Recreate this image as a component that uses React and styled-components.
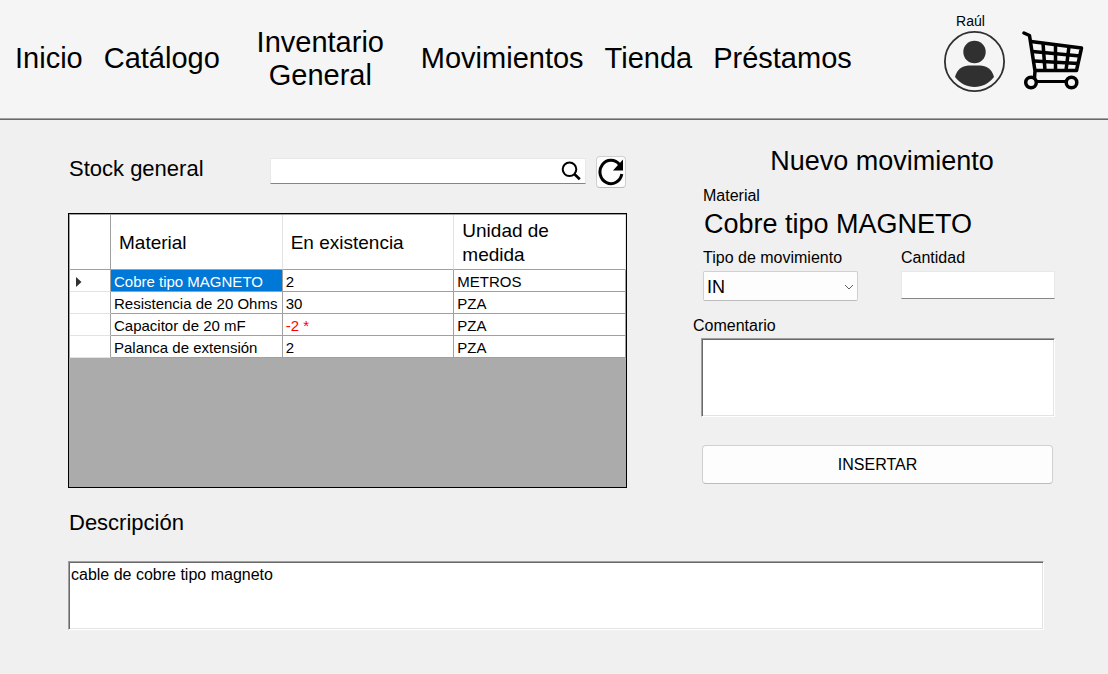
import React, { useState } from "react";
import styled, { createGlobalStyle } from "styled-components";

const GlobalStyle = createGlobalStyle`
  *, *::before, *::after { box-sizing: border-box; }
  body {
    margin: 0;
    background: #f0f0f0;
    color: #000;
    font: 16px/20px "Liberation Sans", Arial, sans-serif;
  }
  button, input, select, textarea { font: inherit; color: inherit; }
`;

const Header = styled.header`
  display: flex;
  align-items: center;
  justify-content: space-between;
  height: 120px;
  padding: 0 23px 2px 15px;
  background: #f5f5f5;
  border-bottom: 1px solid #696969;
  box-shadow: inset 0 -1px #a0a0a0;
`;

const Nav = styled.nav`
  display: flex;
  align-items: center;
  gap: 21px;
`;

const NavLink = styled.a`
  width: ${(p) => (p.$wrap ? "159px" : "auto")};
  color: inherit;
  font-size: 29px;
  line-height: 33px;
  text-align: center;
  text-decoration: none;
`;

const Account = styled.div`
  display: flex;
  align-items: flex-end;
  gap: 17px;
  padding-bottom: 13px;
`;

const User = styled.div`
  display: flex;
  flex-direction: column;
`;

const UserName = styled.span`
  padding: 0 8px 1px 0;
  font-size: 14px;
  line-height: 18px;
  text-align: center;
`;

const IconButton = styled.button`
  display: block;
  padding: 0;
  border: 0;
  background: none;
  svg { display: block; }
`;

const Main = styled.main`
  display: grid;
  grid-template-columns: minmax(0, 559fr) minmax(0, 362fr);
  column-gap: 66px;
  padding: 24px 53px 44px 68px;
`;

const Stock = styled.section`
  display: flex;
  flex-direction: column;
  padding-top: 12px;
`;

const Toolbar = styled.div`
  display: flex;
  align-items: center;
  gap: 10px;
  margin-bottom: 25px;
  padding-right: 1px;
`;

const SectionTitle = styled.h2`
  margin: 0;
  padding-left: 1px;
  font-size: 22px;
  font-weight: 400;
  line-height: 26px;
`;

const ToolbarTitle = styled(SectionTitle)`
  width: 192px;
  padding-bottom: 6px;
`;

const SearchBox = styled.div`
  display: flex;
  flex: 1;
  align-items: center;
  height: 26px;
  margin-bottom: 2px;
  padding-right: 4px;
  background: #fff;
  border: 1px solid #e8e8e8;
  border-bottom-color: #868686;
`;

const SearchInput = styled.input`
  flex: 1;
  min-width: 0;
  height: 22px;
  padding: 0 4px;
  border: 0;
  outline: 0;
  background: none;
`;

const RefreshButton = styled(IconButton)`
  display: grid;
  place-items: center;
  width: 30px;
  height: 32px;
  background: #fdfdfd;
  border: 1px solid #d0d0d0;
  border-bottom-color: #bcbcbc;
  border-radius: 4px;
`;

const GridFrame = styled.div`
  height: 275px;
  overflow: auto;
  background: #ababab;
  border: 1px solid #000;
`;

const Table = styled.table`
  width: 100%;
  table-layout: fixed;
  border-collapse: separate;
  border-spacing: 0;
  border-top: 1px solid #a0a0a0;
  border-left: 1px solid #a0a0a0;
  background: #fff;
`;

const ColumnHeader = styled.th`
  width: ${(p) => (p.$marker ? "41px" : "auto")};
  height: 55px;
  padding: 2px 20px 0 8px;
  border-right: 1px solid ${(p) => (p.$marker ? "#a0a0a0" : "#e3e3e3")};
  border-bottom: 1px solid #a0a0a0;
  font-size: 19px;
  font-weight: 400;
  line-height: 24px;
  text-align: left;
`;

const RowMarker = styled.th`
  height: 22px;
  padding: 2px 0 0 6px;
  border-right: 1px solid #a0a0a0;
  border-bottom: 1px solid #e3e3e3;
  svg { display: block; }
`;

const Cell = styled.td`
  height: 22px;
  padding: 3px 0 0 3px;
  border-right: 1px solid #a0a0a0;
  border-bottom: 1px solid #a0a0a0;
  background: ${(p) => (p.$selected ? "#0078d7" : "#fff")};
  color: ${(p) => (p.$selected ? "#fff" : p.$alert ? "#f00" : "#000")};
  font-size: 15px;
  line-height: 18px;
  white-space: nowrap;
`;

const Form = styled.form`
  display: flex;
  flex-direction: column;
`;

const FormTitle = styled.h2`
  margin: 0 0 8px;
  padding-left: 16px;
  font-size: 27px;
  font-weight: 400;
  line-height: 34px;
  text-align: center;
`;

const MaterialName = styled.output`
  padding: 2px 0 8px 11px;
  font-size: 27px;
  line-height: 32px;
`;

const Label = styled.label`
  display: block;
  padding-left: ${(p) => (p.$inset ? "10px" : "0")};
`;

const FieldRow = styled.div`
  display: grid;
  grid-template-columns: 155fr 154fr;
  column-gap: 43px;
  margin-bottom: 15px;
  padding-left: 10px;
`;

const Field = styled.div`
  display: flex;
  flex-direction: column;
  gap: 3px;
`;

const SelectBox = styled.div`
  position: relative;
  svg {
    position: absolute;
    top: 13px;
    right: 4px;
    pointer-events: none;
  }
`;

const Select = styled.select`
  display: block;
  width: 100%;
  height: 30px;
  padding: 2px 20px 0 3px;
  appearance: none;
  background: #fdfdfd;
  border: 1px solid #d0d0d0;
  border-bottom-color: #bcbcbc;
  border-radius: 2px;
  font-size: 18px;
`;

const NumberInput = styled.input`
  width: 100%;
  height: 28px;
  padding: 0 4px;
  background: #fff;
  border: 1px solid #e8e8e8;
  border-bottom-color: #868686;
  outline: 0;
`;

const TextArea = styled.textarea`
  display: block;
  height: ${(p) => (p.$size === "large" ? "79px" : "69px")};
  padding: 3px 2px;
  resize: none;
  outline: 0;
  background: #fff;
  border: 1px solid;
  border-color: #a0a0a0 #fff #fff #a0a0a0;
  box-shadow: inset 1px 1px #696969, inset -1px -1px #e3e3e3;
`;

const Comment = styled(TextArea)`
  margin: 2px 0 28px 8px;
`;

const SubmitButton = styled.button`
  height: 39px;
  margin: 0 2px 0 9px;
  background: #fdfdfd;
  border: 1px solid #d0d0d0;
  border-bottom-color: #bcbcbc;
  border-radius: 4px;
`;

const Description = styled.section`
  display: flex;
  grid-column: 1 / -1;
  flex-direction: column;
  gap: 25px;
  padding: 22px 11px 0 0;
`;

const AvatarIcon = () => (
  <svg width="61" height="61" viewBox="0 0 61 61" fill="#303030">
    <circle cx="30.5" cy="30.5" r="29.6" fill="none" stroke="#303030" strokeWidth="1.8" />
    <circle cx="30.5" cy="21" r="11.2" />
    <path d="M11 46C13 38 19 34.5 25 34.5H36C42 34.5 48 38 50 46C45 52.500 38 56 30.500 56C23 56 16 52.500 11 46Z" />
  </svg>
);

const CartIcon = () => (
  <svg width="63" height="61" viewBox="0.5 1 63 61" fill="none" stroke="#000" strokeWidth="3.5" strokeLinejoin="round">
    <path d="M2.500 3L8 5.500L13.500 41L13 48" strokeLinecap="round" />
    <path d="M9.500 11.500L60 18L55 40.500H13.500" />
    <path d="M11 21.500L58.500 26M12.500 31L56.500 33.500" />
    <path d="M21.500 13L23.500 40.500M34 14.500V40.500M47.500 16.500L44.500 40.500" />
    <circle cx="9.500" cy="52.500" r="5.300" />
    <circle cx="50" cy="52.500" r="5.300" />
    <path d="M15 51.500H44.500" strokeWidth="3" />
  </svg>
);

const SearchIcon = () => (
  <svg width="20" height="20" viewBox="0 0 20 20" fill="none" stroke="#000">
    <circle cx="8.500" cy="8.300" r="6.800" strokeWidth="2" />
    <path d="M13.300 13L18.800 18.300" strokeWidth="2.600" />
  </svg>
);

const RefreshIcon = () => (
  <svg width="28" height="28" viewBox="0 0 28 28">
    <path d="M24.800 16A11 11.700 0 1 1 22.500 6.500" fill="none" stroke="#000" strokeWidth="3" />
    <path d="M26 1.500V12.500H16Z" />
  </svg>
);

const ChevronIcon = () => (
  <svg width="10" height="7" viewBox="0 0 10 7" fill="none" stroke="#606060">
    <path d="M1 1L5 5L9 1" />
  </svg>
);

const CurrentRowIcon = () => (
  <svg width="6" height="10" viewBox="0 0 6 10" fill="#303030">
    <path d="M0 0L5.500 5L0 10Z" />
  </svg>
);

const links = ["Inicio", "Catálogo", "Inventario General", "Movimientos", "Tienda", "Préstamos"];

const rows = [
  { material: "Cobre tipo MAGNETO", stock: "2", unit: "METROS" },
  { material: "Resistencia de 20 Ohms", stock: "30", unit: "PZA" },
  { material: "Capacitor de 20 mF", stock: "-2 *", unit: "PZA", alert: true },
  { material: "Palanca de extensión", stock: "2", unit: "PZA" },
];

export default function App() {
  const [selected, setSelected] = useState(0);

  return (
    <>
      <GlobalStyle />
      <Header>
        <Nav>
          {links.map((name) => (
            <NavLink key={name} href="#" $wrap={name.includes(" ")}>
              {name}
            </NavLink>
          ))}
        </Nav>
        <Account>
          <User>
            <UserName>Raúl</UserName>
            <IconButton type="button" aria-label="Perfil">
              <AvatarIcon />
            </IconButton>
          </User>
          <IconButton type="button" aria-label="Carrito">
            <CartIcon />
          </IconButton>
        </Account>
      </Header>

      <Main>
        <Stock>
          <Toolbar>
            <ToolbarTitle>Stock general</ToolbarTitle>
            <SearchBox>
              <SearchInput type="text" aria-label="Buscar" />
              <SearchIcon />
            </SearchBox>
            <RefreshButton type="button" aria-label="Actualizar">
              <RefreshIcon />
            </RefreshButton>
          </Toolbar>
          <GridFrame>
            <Table>
              <thead>
                <tr>
                  <ColumnHeader $marker />
                  <ColumnHeader>Material</ColumnHeader>
                  <ColumnHeader>En existencia</ColumnHeader>
                  <ColumnHeader>Unidad de medida</ColumnHeader>
                </tr>
              </thead>
              <tbody>
                {rows.map((row, i) => (
                  <tr key={row.material} onClick={() => setSelected(i)}>
                    <RowMarker>{selected === i && <CurrentRowIcon />}</RowMarker>
                    <Cell $selected={selected === i}>{row.material}</Cell>
                    <Cell $alert={row.alert}>{row.stock}</Cell>
                    <Cell>{row.unit}</Cell>
                  </tr>
                ))}
              </tbody>
            </Table>
          </GridFrame>
        </Stock>

        <Form onSubmit={(e) => e.preventDefault()}>
          <FormTitle>Nuevo movimiento</FormTitle>
          <Label $inset htmlFor="material">Material</Label>
          <MaterialName id="material">{rows[selected].material}</MaterialName>
          <FieldRow>
            <Field>
              <Label htmlFor="tipo">Tipo de movimiento</Label>
              <SelectBox>
                <Select id="tipo" defaultValue="IN">
                  <option>IN</option>
                  <option>OUT</option>
                </Select>
                <ChevronIcon />
              </SelectBox>
            </Field>
            <Field>
              <Label htmlFor="cantidad">Cantidad</Label>
              <NumberInput id="cantidad" type="text" inputMode="numeric" />
            </Field>
          </FieldRow>
          <Label htmlFor="comentario">Comentario</Label>
          <Comment id="comentario" $size="large" />
          <SubmitButton type="submit">INSERTAR</SubmitButton>
        </Form>

        <Description>
          <SectionTitle as="label" htmlFor="descripcion">Descripción</SectionTitle>
          <TextArea id="descripcion" defaultValue="cable de cobre tipo magneto" />
        </Description>
      </Main>
    </>
  );
}
